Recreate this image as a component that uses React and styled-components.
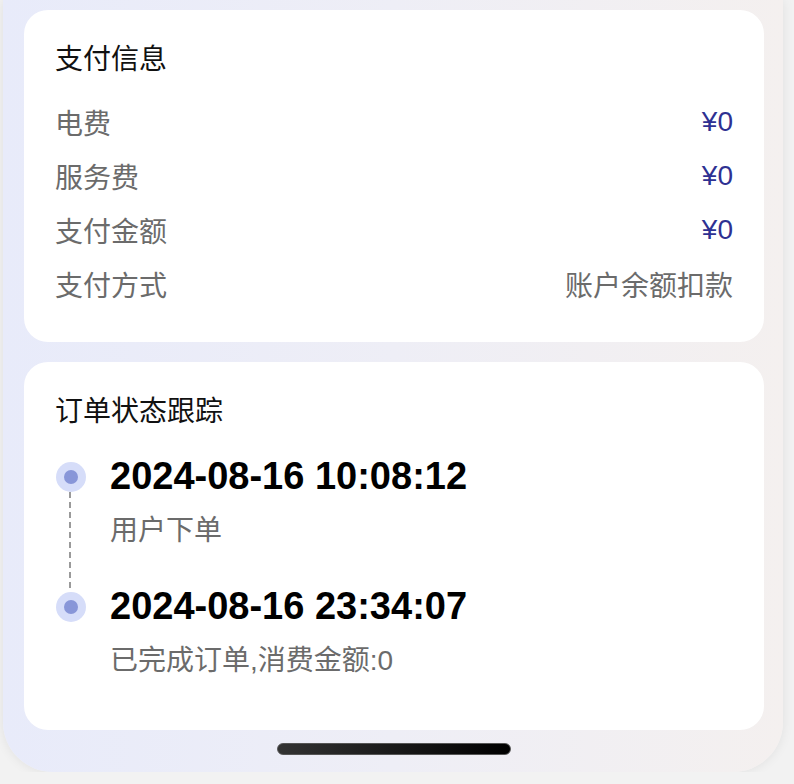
import React from 'react';
import styled, { createGlobalStyle } from 'styled-components';

const GlobalStyle = createGlobalStyle`
  html, body {
    margin: 0;
    padding: 0;
    background: #f2f2f2;
  }
  body {
    font-family: "Liberation Sans", "Noto Sans CJK SC", sans-serif;
    overflow: hidden;
  }
`;

const payRows = [
    { label: '电费', value: '¥0', money: true },
    { label: '服务费', value: '¥0', money: true },
    { label: '支付金额', value: '¥0', money: true },
    { label: '支付方式', value: '账户余额扣款' },
];

const steps = [
    { time: '2024-08-16 10:08:12', text: '用户下单' },
    { time: '2024-08-16 23:34:07', text: '已完成订单,消费金额:0' },
];

const App = () => {
    return (
        <>
            <GlobalStyle />
            <Phone>
                <Card>
                    <CardTitle>支付信息</CardTitle>
                    <RowList>
                        {payRows.map((row) => (
                            <InfoRow key={row.label}>
                                <Label>{row.label}</Label>
                                <Value $money={row.money}>{row.value}</Value>
                            </InfoRow>
                        ))}
                    </RowList>
                </Card>
                <Card $track>
                    <CardTitle>订单状态跟踪</CardTitle>
                    <Timeline>
                        {steps.map((step, index) => {
                            const last = index === steps.length - 1;
                            return (
                                <Step key={step.time}>
                                    <Marker>
                                        <Dot />
                                        {!last && <Dashes />}
                                    </Marker>
                                    <StepBody $last={last}>
                                        <StepTime>{step.time}</StepTime>
                                        <StepText>{step.text}</StepText>
                                    </StepBody>
                                </Step>
                            );
                        })}
                    </Timeline>
                </Card>
                <HomeBar />
            </Phone>
        </>
    );
};

export default App;

const Phone = styled.div`
  width: 780px;
  margin-left: 3px;
  height: 772px;
  box-sizing: border-box;
  padding: 10px 19px 0 21px;
  display: flex;
  flex-direction: column;
  gap: 20px;
  background: linear-gradient(to right, #e8ebfa 0%, #eeeef6 50%, #f4f0ef 100%);
  border-radius: 0 0 50px 50px;
  box-shadow: 0 0 12px rgba(0, 0, 0, 0.08);
`;

const Card = styled.div`
  background: #fff;
  border-radius: 24px;
  padding: ${(p) => (p.$track ? '30px 31px 49px' : '30px 31px 31px')};
`;

const CardTitle = styled.div`
  font-size: 28px;
  line-height: 40px;
  color: #111;
`;

const RowList = styled.div`
  margin-top: 15px;
  display: flex;
  flex-direction: column;
`;

const InfoRow = styled.div`
  display: flex;
  justify-content: space-between;
  align-items: center;
  height: 54px;
  font-size: 28px;
`;

const Label = styled.span`
  color: #6b6b6b;
`;

const Value = styled.span`
  color: ${(p) => (p.$money ? '#2e3192' : '#6b6b6b')};
`;

const Timeline = styled.div`
  margin-top: 22px;
  display: flex;
  flex-direction: column;
`;

const Step = styled.div`
  display: grid;
  grid-template-columns: 55px 1fr;
`;

const Marker = styled.div`
  display: flex;
  flex-direction: column;
  align-items: center;
  width: 30px;
  margin-left: 1px;
`;

const Dot = styled.div`
  flex-shrink: 0;
  margin-top: 8px;
  width: 30px;
  height: 30px;
  border-radius: 50%;
  background: #d6ddf9;
  display: flex;
  align-items: center;
  justify-content: center;

  &::after {
    content: '';
    width: 14px;
    height: 14px;
    border-radius: 50%;
    background: #8896d8;
  }
`;

const Dashes = styled.div`
  flex: 1;
  width: 2px;
  margin-left: -3px;
  margin-bottom: -7px;
  background: repeating-linear-gradient(to bottom, #9a9a9a 0 6px, transparent 6px 10px);
`;

const StepBody = styled.div`
  display: flex;
  flex-direction: column;
  gap: 13px;
  padding-bottom: ${(p) => (p.$last ? '0' : '33px')};
`;

const StepTime = styled.div`
  font-size: 38px;
  line-height: 44px;
  font-weight: 700;
  color: #000;
`;

const StepText = styled.div`
  font-size: 28px;
  line-height: 40px;
  color: #6b6b6b;
`;

const HomeBar = styled.div`
  align-self: center;
  margin-top: -7px;
  width: 234px;
  height: 12px;
  box-sizing: border-box;
  border-radius: 6px;
  border: 1px solid #555;
  background: linear-gradient(to right, #333, #000);
`;
